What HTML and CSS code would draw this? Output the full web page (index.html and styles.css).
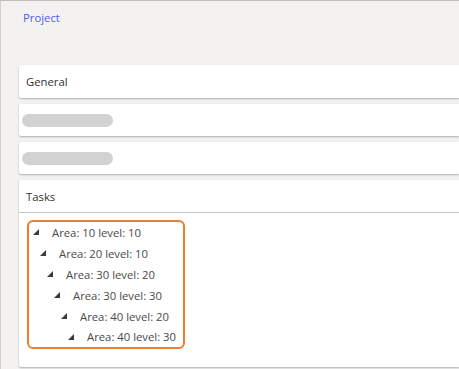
FILE: index.html
```html
<!DOCTYPE html>
<html>
<head>
<meta charset="utf-8">
<link rel="stylesheet" href="styles.css">
</head>
<body>
<div class="page">
  <a class="crumb">Project</a>
  <div class="cards">
    <div class="card">
      <div class="card-title">General</div>
    </div>
    <div class="card skel-card"><div class="skel"></div></div>
    <div class="card skel-card"><div class="skel"></div></div>
    <div class="card tasks">
      <div class="card-title sep">Tasks</div>
      <div class="tree-wrap">
        <ul class="tree">
          <li class="node" style="--lvl:0"><span class="tri"><svg width="6" height="6" viewBox="0 0 6 6"><polygon points="0,6 6,6 6,0"/></svg></span><span class="lbl">Area: 10 level: 10</span></li>
          <li class="node" style="--lvl:1"><span class="tri"><svg width="6" height="6" viewBox="0 0 6 6"><polygon points="0,6 6,6 6,0"/></svg></span><span class="lbl">Area: 20 level: 10</span></li>
          <li class="node" style="--lvl:2"><span class="tri"><svg width="6" height="6" viewBox="0 0 6 6"><polygon points="0,6 6,6 6,0"/></svg></span><span class="lbl">Area: 30 level: 20</span></li>
          <li class="node" style="--lvl:3"><span class="tri"><svg width="6" height="6" viewBox="0 0 6 6"><polygon points="0,6 6,6 6,0"/></svg></span><span class="lbl">Area: 30 level: 30</span></li>
          <li class="node" style="--lvl:4"><span class="tri"><svg width="6" height="6" viewBox="0 0 6 6"><polygon points="0,6 6,6 6,0"/></svg></span><span class="lbl">Area: 40 level: 20</span></li>
          <li class="node" style="--lvl:5"><span class="tri"><svg width="6" height="6" viewBox="0 0 6 6"><polygon points="0,6 6,6 6,0"/></svg></span><span class="lbl">Area: 40 level: 30</span></li>
        </ul>
      </div>
    </div>
  </div>
</div>
</body>
</html>
```
FILE: styles.css
```css
html, body {
  margin: 0;
  padding: 0;
  height: 100%;
  overflow: hidden;
}
body {
  background: #f3f2f1;
  font-family: "Open Sans", "Noto Sans", sans-serif;
  font-size: 11.3px;
  color: #323130;
}
.page {
  box-sizing: border-box;
  height: 100%;
  border-top: 1px solid #bdbdbd;
  border-left: 1px solid #d0d0d0;
  display: flex;
  flex-direction: column;
}
.crumb {
  display: block;
  color: #4a5ef0;
  font-size: 11.3px;
  line-height: 16px;
  padding: 9px 0 0 22px;
  height: 55px;
  box-sizing: border-box;
}
.cards {
  display: flex;
  flex-direction: column;
  gap: 6px;
  padding: 9px 0 0 18px;
}
.card {
  background: #fff;
  border-radius: 2px 0 0 2px;
  box-shadow: 0 1px 2px rgba(0, 0, 0, 0.28);
}
.card-title {
  height: 33px;
  box-sizing: border-box;
  display: flex;
  align-items: center;
  padding-left: 7px;
  color: #323130;
}
.card-title.sep {
  border-bottom: 1px solid #c8c6c4;
}
.skel-card {
  height: 32px;
  display: flex;
  align-items: center;
  padding-left: 3px;
}
.skel {
  width: 91px;
  height: 13px;
  border-radius: 7px;
  background: #d2d2d2;
}
.tasks {
  height: 187px;
}
.tree-wrap {
  padding: 7px 0 0 8px;
}
.tree {
  list-style: none;
  margin: 0;
  padding: 0;
  width: 154px;
  border: 2px solid #ed7d31;
  border-radius: 6px;
}
.node {
  height: 20.9px;
  display: flex;
  align-items: center;
  padding-left: calc(4px + var(--lvl) * 7px);
  color: #4a4a4a;
}
.tri {
  width: 19px;
  display: flex;
  align-items: center;
}
.tri svg {
  fill: #3a3a3a;
}
.lbl {
  white-space: nowrap;
}
```
